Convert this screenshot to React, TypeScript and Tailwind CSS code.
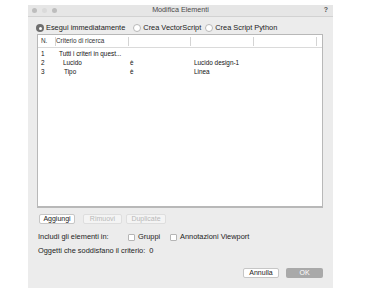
const font = { fontFamily: '"Liberation Sans", Arial, sans-serif' };

function Radio({ checked, label }: { checked?: boolean; label: string }) {
  return (
    <div className="flex items-center gap-[2px]">
      {checked ? (
        <span className="flex h-[8px] w-[8px] items-center justify-center rounded-full bg-[#6e6e6e]">
          <span className="h-[3px] w-[3px] rounded-full bg-white" />
        </span>
      ) : (
        <span className="h-[8px] w-[8px] rounded-full border border-[#b8b8b8] bg-white" />
      )}
      <span>{label}</span>
    </div>
  );
}

function Check({ label }: { label: string }) {
  return (
    <div className="flex items-center gap-[3px]">
      <span className="h-[7px] w-[7px] rounded-[1px] border border-[#b5b5b5] bg-white" />
      <span>{label}</span>
    </div>
  );
}

function HeadCell({ w, label, pl }: { w: string; label?: string; pl: string }) {
  return (
    <div className={`${w} flex h-full items-center justify-between`}>
      <span className={pl}>{label}</span>
      <span className="h-[9px] w-px bg-[#d4d4d4]" />
    </div>
  );
}

const rows = [
  { n: "1", a: "Tutti i criteri in quest...", b: "", c: "", pad: "pl-[3px]" },
  { n: "2", a: "Lucido", b: "è", c: "Lucido design-1", pad: "pl-[7px]" },
  { n: "3", a: "Tipo", b: "è", c: "Linea", pad: "pl-[8px]" },
];

export default function App() {
  return (
    <div className="h-[292px] w-[384px] bg-white pt-[5px] pl-[28px]" style={font}>
      <div className="flex h-[283px] w-[305px] flex-col bg-[#ececec] text-[7.4px] text-[#222]">
        {/* title bar */}
        <div className="grid h-[12px] grid-cols-[1fr_auto_1fr] items-center border-b border-[#d2d2d2] bg-[#e6e6e6] px-[4px]">
          <div className="flex items-center gap-[5px]">
            <span className="h-[5px] w-[5px] rounded-full bg-[#bdbdbd]" />
            <span className="h-[5px] w-[5px] rounded-full bg-[#dadada]" />
            <span className="h-[5px] w-[5px] rounded-full bg-[#bdbdbd]" />
          </div>
          <div className="text-[7.2px] text-[#4a4a4a]">Modifica Elementi</div>
          <div className="flex justify-end pr-[1px] text-[7px] font-bold text-[#555]">?</div>
        </div>

        <div className="flex flex-1 flex-col pl-[9px] pr-[10px] pb-[10px]">
          {/* radios */}
          <div className="mt-[6px] flex h-[10px] items-center -ml-[1px]">
            <Radio checked label="Esegui immediatamente" />
            <div className="ml-[8px]">
              <Radio label="Crea VectorScript" />
            </div>
            <div className="ml-[4px]">
              <Radio label="Crea Script Python" />
            </div>
          </div>

          {/* table */}
          <div className="mt-[1px] h-[174px] border border-b-2 border-[#b8b8b8] bg-white text-[6.4px]">
            <div className="flex h-[13px] border-b border-[#dadada] text-[#333]">
              <HeadCell w="w-[18px]" label="N." pl="pl-[3px]" />
              <HeadCell w="w-[73px]" label="Criterio di ricerca" pl="pl-[0px]" />
              <HeadCell w="w-[62px]" pl="" />
              <HeadCell w="w-[63px]" pl="" />
              <HeadCell w="w-[63px]" pl="" />
            </div>
            <div className="pt-[1px]">
              {rows.map((r) => (
                <div key={r.n} className="flex h-[9px] items-center text-[#111]">
                  <div className="w-[18px] pl-[3px]">{r.n}</div>
                  <div className={`w-[73px] ${r.pad}`}>{r.a}</div>
                  <div className="w-[62px] pl-[1px]">{r.b}</div>
                  <div className="w-[63px] pl-[3px]">{r.c}</div>
                </div>
              ))}
            </div>
          </div>

          {/* table buttons */}
          <div className="mt-[6px] flex h-[10px] items-stretch pl-[2px] text-[7px]">
            <div className="flex w-[36px] items-center justify-center rounded-[2px] border border-[#c6c6c6] bg-white">Aggiungi</div>
            <div className="ml-[8px] flex w-[39px] items-center justify-center rounded-[2px] border border-[#dedede] bg-[#f4f4f4] text-[#b8b8b8]">Rimuovi</div>
            <div className="ml-[4px] flex w-[40px] items-center justify-center rounded-[2px] border border-[#dedede] bg-[#f4f4f4] text-[#b8b8b8]">Duplicate</div>
          </div>

          <div className="mt-[8px] flex h-[10px] items-center pl-[1px]">
            <span className="w-[90px]">Includi gli elementi in:</span>
            <div className="w-[42px]">
              <Check label="Gruppi" />
            </div>
            <Check label="Annotazioni Viewport" />
          </div>

          <div className="mt-[4px] flex h-[10px] items-center pl-[1px]">Oggetti che soddisfano il criterio:&nbsp; 0</div>

          <div className="mt-auto flex h-[10px] items-stretch justify-end text-[7px]">
            <div className="flex w-[36px] items-center justify-center rounded-[2px] border border-[#c6c6c6] bg-white">Annulla</div>
            <div className="ml-[7px] flex w-[37px] items-center justify-center rounded-[2px] bg-[#a9a9a9] text-white">OK</div>
          </div>
        </div>
      </div>
    </div>
  );
}
